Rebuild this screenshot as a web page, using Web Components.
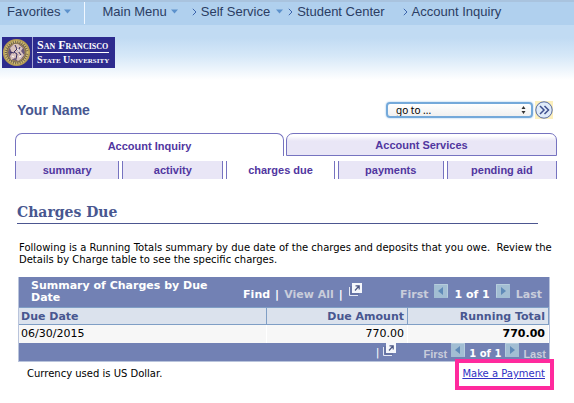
<!DOCTYPE html>
<html lang="en">
<head>
<meta charset="utf-8">
<title>Account Inquiry - Charges Due</title>
<style>
html{background:#fff}
body{margin:0;min-height:100vh;font:11px "Liberation Sans",Arial,sans-serif;color:#000;
 --ink:#485790;--violet:#51369f;--edge:#7673c0;--lilac:#e9e6f6;--bar:#7281b4}
</style>
</head>
<body>
<account-page></account-page>
<script>
const define=(name,html,setup)=>customElements.define(name,class extends HTMLElement{
  constructor(){
    super();
    const t=document.createElement('template');
    t.innerHTML=html;
    this.attachShadow({mode:'open'}).append(t.content.cloneNode(true));
  }
  connectedCallback(){ if(setup) setup(this); }
});

define('crumb-menu',`<style>
:host{display:flex;align-items:center;font-size:13px;line-height:15px;color:#2b3d63}
a{color:inherit;text-decoration:none;white-space:nowrap}
svg{flex:none}
.lead{display:none;margin-right:4px}
.drop{display:none;margin-left:4px}
:host([sub]) .lead{display:block}
:host([menu]) .drop{display:block}
:host([sub]) .drop{margin-left:6px}
</style>
<svg class="lead" width="5" height="8" viewBox="0 0 5 8"><path d="M.8 .8L4 4L.8 7.2" fill="none" stroke="#3d65ad"/></svg>
<a href="#"><slot></slot></a>
<svg class="drop" width="7" height="5" viewBox="0 0 7 5"><path d="M0 .5H7L3.5 4.5Z" fill="#5c91cc"/></svg>`);

define('brand-logo',`<style>
:host{display:flex;width:113px;height:31px;background:#2d2b8e;color:#fff;font-family:"Liberation Serif",serif;font-variant:small-caps;font-weight:bold}
svg{flex:none}
.name{border-left:1px solid #a5a3d0;margin-left:1px;padding:2px 0 0 4px;white-space:nowrap}
.name div{line-height:13px;height:13px}
.top{font-size:12px;border-bottom:1px solid #fff}
.bottom{font-size:10px}
</style>
<svg width="29" height="31" viewBox="0 0 29 31">
<circle cx="14.5" cy="15.5" r="12.6" fill="#6d6152" stroke="#b39b55" stroke-width="2"/>
<circle cx="14.5" cy="15.5" r="10.9" fill="none" stroke="#d2bd72" stroke-width="2.2" stroke-dasharray="1.3 1"/>
<circle cx="14.5" cy="15.5" r="8.8" fill="#69577a" stroke="#aa8d51"/>
<path d="M8 11l4-4 4 0 5 4-2 3 3 4-3 4-3 2-3-3-4 2-1-4 2-3z" fill="#d9c2bd"/>
<path d="M13 8l2 4-3 3 3 2-1 5M18 10l-2 4 3 4M8 15l4 1" fill="none" stroke="#342b62"/>
<path d="M15 12l2 1-1 2M10 19l2 1M17 20l2-1" stroke="#fff" fill="none"/>
</svg>
<div class="name"><div class="top">San Francisco</div><div class="bottom">State University</div></div>`);

define('site-header',`<style>
:host{display:block;height:80px;background:linear-gradient(#c1dbf3 38px,#d6e8f8 56px,#fff 80px)}
nav{display:flex;height:25px;box-sizing:border-box;border-top:2px solid #a9c3de;background:#b0d0ee;padding:0 0 4px 7px;align-items:center}
.rule{width:1px;height:22px;background:#f0f7ff;margin:0 17px 0 13px;align-self:flex-start}
crumb-menu[sub]{margin-left:18px}
crumb-menu.near{margin-left:5px}
crumb-menu.self{margin-left:14px}
brand-logo{margin:12px 0 0 2px}
</style>
<nav aria-label="Breadcrumb">
<crumb-menu menu>Favorites</crumb-menu><span class="rule"></span>
<crumb-menu menu>Main Menu</crumb-menu>
<crumb-menu class="self" sub menu>Self Service</crumb-menu>
<crumb-menu class="near" sub>Student Center</crumb-menu>
<crumb-menu sub>Account Inquiry</crumb-menu>
</nav>
<brand-logo></brand-logo>`);

define('goto-bar',`<style>
:host{display:flex;justify-content:space-between;align-items:center;padding:0 4px 0 2px}
h1{font-size:14px;line-height:16px;margin:0;color:var(--ink)}
form{display:flex;align-items:center;gap:2px}
.pick{display:grid;align-items:center}
.pick>*{grid-area:1/1}
select{appearance:none;width:147px;height:16px;box-sizing:border-box;border:2px solid #74a9da;border-radius:4px;box-shadow:0 0 2px #8bbbe8;background:linear-gradient(#fff,#f0f0f0);font:10px "Noto Sans",sans-serif;line-height:12px;padding:0 0 0 8px;margin:0;color:#000;outline:0}
.pick svg{justify-self:end;margin-right:7px;pointer-events:none}
button{width:18px;height:18px;border:0;padding:0;background:#fdf0bd;display:block}
button svg{display:block}
</style>
<h1>Your Name</h1>
<form><label class="pick"><select aria-label="Go to"><option>go to ...</option></select>
<svg width="5" height="8" viewBox="0 0 5 8"><path d="M2.5 0L4.5 3H.5ZM2.5 8L4.5 5H.5Z" fill="#333"/></svg></label>
<button type="button" aria-label="Go"><svg width="18" height="18" viewBox="0 0 18 18"><circle cx="9" cy="9" r="8.2" fill="#e0ebf9" stroke="#5669a0"/><path d="M5 5l4 4-4 4M9.5 5l4 4-4 4" fill="none" stroke="#40508e" stroke-width="1.5"/></svg></button></form>`);

define('tab-button',`<style>
:host{display:block}
button{display:block;width:100%;height:18px;padding:0;border:solid var(--edge);border-width:0 1px;background:var(--lilac);color:var(--violet);font:bold 11px/13px "Liberation Sans",Arial,sans-serif;text-align:center}
:host([large]) button{height:23px;padding-top:2px;border-width:1px 1px 0;border-radius:7px 7px 0 0;background:linear-gradient(#fff 2px,var(--lilac) 7px)}
:host([large]:not([selected])) button{border-bottom-width:1px}
:host([selected]) button{background:#fff!important}
</style><button type="button" role="tab"><slot></slot></button>`,
el=>el.shadowRoot.querySelector('button').setAttribute('aria-selected',el.hasAttribute('selected')));

define('tab-rows',`<style>
:host{display:grid;gap:5px}
div{display:grid;gap:3px}
.main{grid-template-columns:269fr 271fr;gap:2px}
.sub{grid-template-columns:105fr 102fr 109fr 107fr 111fr}
</style>
<div class="main" role="tablist"><tab-button large selected>Account Inquiry</tab-button><tab-button large>Account Services</tab-button></div>
<div class="sub" role="tablist"><tab-button>summary</tab-button><tab-button>activity</tab-button><tab-button selected>charges due</tab-button><tab-button>payments</tab-button><tab-button>pending aid</tab-button></div>`);

define('page-arrow',`<style>
:host{display:block}
button{display:block;width:14px;height:14px;padding:0;border:0;background:#a2bed3}
svg{display:block}
:host([back]) svg{transform:scaleX(-1)}
</style><button type="button"><svg width="14" height="14" viewBox="0 0 14 14"><path d="M.5 13.5V.5H13.5" stroke="#b6cddd" fill="none"/><path d="M5 3L10 7L5 11Z" fill="#608bb8"/></svg></button>`,
el=>el.shadowRoot.querySelector('button').setAttribute('aria-label',el.hasAttribute('back')?'Previous':'Next'));

define('popout-icon',`<style>:host{display:block}svg{display:block}</style>
<svg width="13" height="13" viewBox="0 0 13 13"><path d="M.5 4V12.5H9" fill="none" stroke="#e4e8f4"/><path d="M3 0h10v10H3z" fill="#f5f7fb"/><path d="M2 3V11H10" fill="none" stroke="#5d6896"/><path d="M6 7.5L10 3M6.5 2.8H10.2V6.5" fill="none" stroke="#4b5682" stroke-width="1.2"/></svg>`);

define('table-pager',`<style>
:host{display:flex;align-items:flex-end;gap:6px;color:#fff;font:bold 11px/14px "DejaVu Sans",Verdana,sans-serif;white-space:nowrap}
.off{color:#c9cddb}
:host([small]){font-size:10px;gap:4px}
:host([small]) .off{font-family:"Liberation Sans",Arial,sans-serif;font-size:11px}
page-arrow{margin-bottom:4px}
</style><span class="off">First</span><page-arrow back></page-arrow><span>1 of 1</span><page-arrow></page-arrow><span class="off">Last</span>`);

define('charges-table',`<style>
:host{display:block;font-family:"DejaVu Sans",Verdana,sans-serif}
table{width:100%;table-layout:fixed;border-collapse:separate;border-spacing:0;border:solid #b9c4dc;border-width:0 1px 1px;font-size:11px;line-height:13px}
th,td{padding:0;text-align:right;font-weight:normal}
.bar{background:var(--bar);color:#fff}
.bar>div{display:flex;align-items:center}
.title{height:30px;font:bold 11px/14px "DejaVu Sans",Verdana,sans-serif}
h3{font-size:11px;line-height:12px;margin:0;text-align:left;width:37%;padding:0 0 0 12px;box-sizing:border-box}
.tools{display:flex;align-items:center;gap:5px;margin:6px auto 0 28px}
.tools a{color:#fff;text-decoration:none}
.tools .off{color:#c9cddb}
.tools popout-icon{margin:-12px 0 0 1px}
.title table-pager{margin:1px 7px 0 0}
.foot{height:18px;justify-content:flex-end}
.foot popout-icon{margin:-6px 27px 0 4px}
.foot table-pager{margin:0 3px 0 0}
.heads th{background:#dbe2ed;color:var(--ink);font-weight:bold;border:solid #7f9ec5;border-width:1px 1px 1px 0;padding:2px 3px 1px}
.row td{background:#f7f7f7;padding:2px 3px 3px;border-right:1px solid #fff}
.heads th:first-child,.row td:first-child{text-align:left;padding-left:2px}
.total{font-weight:bold}
</style>
<table>
<colgroup><col style="width:46.8%"><col style="width:26.6%"><col style="width:26.6%"></colgroup>
<tbody>
<tr><td class="bar" colspan="3"><div class="title"><h3>Summary of Charges by Due Date</h3>
<div class="tools"><a href="#">Find</a><span>|</span><span class="off">View All</span><span>|</span><popout-icon></popout-icon></div><table-pager></table-pager></div></td></tr>
<tr class="heads"><th scope="col">Due Date</th><th scope="col">Due Amount</th><th scope="col">Running Total</th></tr>
<tr class="row"><td>06/30/2015</td><td>770.00</td><td class="total">770.00</td></tr>
<tr><td class="bar" colspan="3"><div class="foot"><span>|</span><popout-icon></popout-icon><table-pager small></table-pager></div></td></tr>
</tbody></table>`);

define('pay-link',`<style>
:host{display:block;border:4px solid #ff2a9d;background:#fff;padding:5px 5px 6px 3px;font:10px/12px "DejaVu Sans",Verdana,sans-serif}
a{color:#2f31c4;white-space:nowrap}
</style><a href="#"><slot></slot></a>`);

define('account-page',`<style>
:host{display:block}
main{padding:21px 17px 22px 15px}
tab-rows{margin-top:14px}
h2{font:bold 14px/17px "DejaVu Serif",Georgia,serif;color:var(--ink);margin:25px 19px 0 2px;padding-bottom:2px;border-bottom:1px solid #4c5690}
p{font:10px/12px "DejaVu Sans",Verdana,sans-serif;margin:18px 0 0 4px}
.intro{white-space:pre-wrap;margin-right:-12px}
.grid{position:relative;margin:11px 7px 0 3px}
pay-link{position:absolute;right:-4px;bottom:-28px}
.note{margin:6px 0 0 12px}
</style>
<site-header></site-header>
<main>
<goto-bar></goto-bar>
<tab-rows></tab-rows>
<h2>Charges Due</h2>
<p class="intro">Following is a Running Totals summary by due date of the charges and deposits that you owe.  Review the Details by Charge table to see the specific charges.</p>
<div class="grid"><charges-table></charges-table><pay-link>Make a Payment</pay-link></div>
<p class="note">Currency used is US Dollar.</p>
</main>`);
</script>
</body>
</html>
